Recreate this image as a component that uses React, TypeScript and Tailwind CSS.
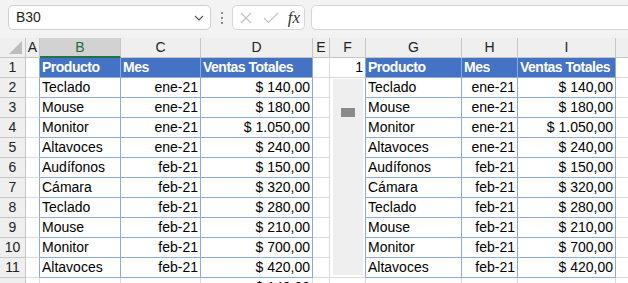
import React from 'react';

const FONT = "font-['Liberation_Sans',Arial,sans-serif]";

const products = ['Teclado', 'Mouse', 'Monitor', 'Altavoces', 'Audífonos', 'Cámara', 'Teclado', 'Mouse', 'Monitor', 'Altavoces'];
const months = ['ene-21', 'ene-21', 'ene-21', 'ene-21', 'feb-21', 'feb-21', 'feb-21', 'feb-21', 'feb-21', 'feb-21'];
const sales = ['$ 140,00', '$ 180,00', '$ 1.050,00', '$ 240,00', '$ 150,00', '$ 320,00', '$ 280,00', '$ 210,00', '$ 700,00', '$ 420,00'];

const columns = ['A', 'B', 'C', 'D', 'E', 'F', 'G', 'H', 'I', ''];

const grid = 'border-r border-b border-[#dadada]';
const table = 'border-r border-b border-[#8ea9db]';
const head = 'bg-[#4472c4] text-white font-bold tracking-[-0.5px] border-r border-b border-[#8ea9db]';

function Cell({ className = '', right, children }: { className?: string; right?: boolean; children?: React.ReactNode }) {
  return (
    <div
      className={`h-5 flex items-center px-[2px] overflow-hidden whitespace-nowrap ${right ? 'justify-end' : ''} ${className}`}
    >
      {children}
    </div>
  );
}

function FormulaBar() {
  return (
    <div className="h-[38px] bg-[#f3f3f3] flex items-start pt-[5px] pl-2 overflow-hidden">
      <div className="w-[203px] h-[25px] shrink-0 bg-white border border-[#cfcfcf] rounded-[5px] flex items-center justify-between pl-[7px] pr-[6px]">
        <span className="text-[14px] text-[#1f1f1f]">B30</span>
        <svg width="10" height="6" viewBox="0 0 10 6" className="text-[#555]">
          <path d="M1 1l4 4 4-4" fill="none" stroke="currentColor" strokeWidth="1.2" />
        </svg>
      </div>
      <div className="w-[21px] h-[25px] shrink-0 flex flex-col items-center justify-center gap-[3px]">
        <span className="w-[2px] h-[2px] bg-[#8a8a8a]" />
        <span className="w-[2px] h-[2px] bg-[#8a8a8a]" />
        <span className="w-[2px] h-[2px] bg-[#8a8a8a]" />
      </div>
      <div className="w-[73px] h-[25px] shrink-0 bg-white border border-[#d6d6d6] rounded-[5px] flex items-center pl-[6px] pr-[4px]">
        <svg width="14" height="14" viewBox="0 0 14 14" className="text-[#c2c2c2]">
          <path d="M2 2l10 10M12 2L2 12" stroke="currentColor" strokeWidth="1.1" />
        </svg>
        <svg width="16" height="14" viewBox="0 0 16 14" className="ml-[10px] text-[#c2c2c2]">
          <path d="M1 7l4.5 4.5L15 2" fill="none" stroke="currentColor" strokeWidth="1.1" />
        </svg>
        <span className="ml-auto font-['Liberation_Serif',serif] italic text-[17px] leading-none text-[#333]">fx</span>
      </div>
      <div className="ml-[6px] w-[340px] h-[25px] shrink-0 bg-white border border-[#d6d6d6] rounded-[5px]" />
    </div>
  );
}

function ColumnHeader({ label }: { label: string }) {
  if (label === 'B') {
    return (
      <div className="h-5 flex items-center justify-center bg-[#d2d2d2] border-r border-[#c6c6c6] border-b-2 border-b-[#217346] text-[#1e6b41]">
        {label}
      </div>
    );
  }
  return (
    <div className="h-5 flex items-center justify-center bg-[#efefef] border-r border-b border-[#c6c6c6] text-[#222]">
      {label}
    </div>
  );
}

function RowHeader({ n }: { n?: number }) {
  return (
    <div className="h-5 flex items-center justify-center bg-[#efefef] border-r border-b border-[#c6c6c6] text-[#222]">
      {n}
    </div>
  );
}

function TableCells({ row }: { row: number }) {
  if (row === 1) {
    return (
      <>
        <Cell className={head}>Producto</Cell>
        <Cell className={head}>Mes</Cell>
        <Cell className={head}>Ventas Totales</Cell>
      </>
    );
  }
  const i = row - 2;
  return (
    <>
      <Cell className={table}>{products[i]}</Cell>
      <Cell className={table} right>{months[i]}</Cell>
      <Cell className={table} right>{sales[i]}</Cell>
    </>
  );
}

export default function App() {
  const rows = Array.from({ length: 11 }, (_, i) => i + 1);

  return (
    <div className={`w-[628px] h-[283px] overflow-hidden bg-white text-[14px] text-black ${FONT}`}>
      <FormulaBar />
      <div className="grid grid-cols-[26px_14px_81px_80px_112px_17px_36px_96px_56px_98px_30px] auto-rows-[20px]">
        {/* corner */}
        <div className="h-5 bg-[#efefef] border-r border-b border-[#c6c6c6] flex items-end justify-end pr-[3px] pb-[3px]">
          <svg width="13" height="13" viewBox="0 0 13 13">
            <path d="M13 0V13H0Z" fill="#bdbdbd" />
          </svg>
        </div>
        {columns.map((c, i) => (
          <ColumnHeader key={i} label={c} />
        ))}

        {rows.map((r) => (
          <React.Fragment key={r}>
            <RowHeader n={r} />
            <Cell className="border-r border-b border-r-[#8ea9db] border-b-[#dadada]" />
            <TableCells row={r} />
            <Cell className={grid} />
            {r === 1 && (
              <Cell className="border-r border-b border-r-[#8ea9db] border-b-[#dadada]" right>1</Cell>
            )}
            {r === 2 && (
              <div className="row-span-10 border-r border-b border-r-[#8ea9db] border-b-[#dadada] pl-[3px] pr-[2px] pt-px pb-[2px]">
                <div className="h-full bg-[#efefef] pt-[29px] pl-[8px]">
                  <div className="w-[14px] h-[9px] bg-[#8a8a8a]" />
                </div>
              </div>
            )}
            <TableCells row={r} />
            <Cell className={grid} />
          </React.Fragment>
        ))}

        {/* row 12, mostly below the window */}
        <RowHeader />
        <Cell className={grid} />
        <Cell className={grid} />
        <Cell className={grid} />
        <Cell className={grid} right>$ 140,00</Cell>
        <Cell className={grid} />
        <Cell className={grid} />
        <Cell className={grid} />
        <Cell className={grid} />
        <Cell className={grid} />
        <Cell className={grid} />
      </div>
    </div>
  );
}
